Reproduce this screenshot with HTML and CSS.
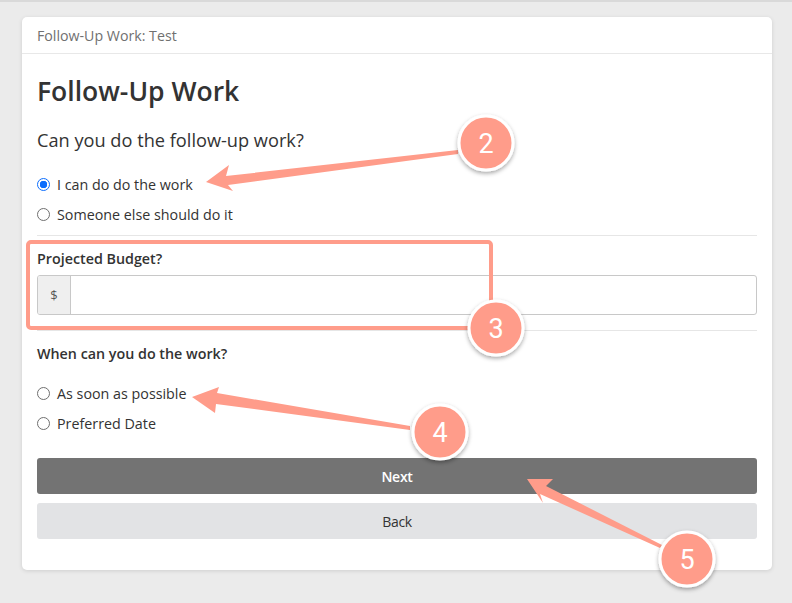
FILE: index.html
```html
<!DOCTYPE html>
<html>
<head>
<meta charset="utf-8">
<link rel="stylesheet" href="styles.css">
</head>
<body>
<div class="page">
  <div class="card">
    <div class="card-header">Follow-Up Work: Test</div>
    <div class="card-body">
      <h1 class="title">Follow-Up Work</h1>
      <div class="question">Can you do the follow-up work?</div>
      <div class="radios first">
        <label class="radio"><span class="dot checked"></span>I can do do the work</label>
        <label class="radio"><span class="dot"></span>Someone else should do it</label>
      </div>
      <div class="rule"></div>
      <div class="field">
        <div class="field-label">Projected Budget?</div>
        <div class="input-group">
          <span class="addon">$</span>
          <span class="input"></span>
        </div>
      </div>
      <div class="rule"></div>
      <div class="field-label when">When can you do the work?</div>
      <div class="radios second">
        <label class="radio"><span class="dot"></span>As soon as possible</label>
        <label class="radio"><span class="dot"></span>Preferred Date</label>
      </div>
      <div class="buttons">
        <div class="btn btn-next">Next</div>
        <div class="btn btn-back">Back</div>
      </div>
    </div>
  </div>

  <svg class="annotations" width="792" height="603" viewBox="0 0 792 603">
    <defs>
      <filter id="sh" x="-50%" y="-50%" width="200%" height="200%">
        <feDropShadow dx="0" dy="2" stdDeviation="2" flood-color="#000" flood-opacity="0.35"/>
      </filter>
    </defs>
    <rect x="28" y="242" width="463" height="86" rx="3" fill="none" stroke="#ff9c8a" stroke-width="4"/>
    <!-- arrow 2 -->
    <polygon points="206,182 229,165 226,176 458,150 458,154 228,185 233,191" fill="#ff9c8a"/>
    <!-- arrow 4 -->
    <polygon points="192,397 219,387 217,393 410,426 410,430 216,404 215,413" fill="#ff9c8a"/>
    <!-- arrow 5 -->
    <polygon points="527,479 553,479 546,486 662,545 660,548 540,494 543,503" fill="#ff9c8a"/>
    <g filter="url(#sh)">
      <circle cx="486" cy="143" r="27" fill="#ff9c8a" stroke="#fff" stroke-width="3"/>
      <circle cx="496" cy="328" r="27" fill="#ff9c8a" stroke="#fff" stroke-width="3"/>
      <circle cx="440" cy="432" r="27" fill="#ff9c8a" stroke="#fff" stroke-width="3"/>
      <circle cx="687" cy="559" r="27" fill="#ff9c8a" stroke="#fff" stroke-width="3"/>
    </g>
    <g class="nums" fill="#fff" text-anchor="middle">
      <text x="486" y="153">2</text>
      <text x="496" y="338">3</text>
      <text x="440" y="442">4</text>
      <text x="687" y="569">5</text>
    </g>
  </svg>
</div>
</body>
</html>
```

FILE: styles.css
```css
* { box-sizing: border-box; }
html, body { margin: 0; padding: 0; }
body {
  background: #ebebeb;
  font-family: "Open Sans", "Noto Sans", sans-serif;
  color: #333;
}
.page {
  position: relative;
  width: 792px;
  height: 603px;
  border-top: 2px solid #d9d9d9;
  padding: 15px 20px 0 22px;
}
.card {
  width: 750px;
  height: 553px;
  background: #fff;
  border-radius: 5px;
  box-shadow: 0 1px 4px rgba(0,0,0,0.12);
}
.card-header {
  height: 37px;
  padding: 0 15px;
  line-height: 37px;
  font-size: 14.2px;
  color: #707070;
  border-bottom: 1px solid #e8e8e8;
}
.card-body {
  padding: 0 15px;
}
.title {
  margin: 0;
  padding-top: 19px;
  font-size: 26.5px;
  font-weight: 600;
  line-height: 36px;
  color: #333;
}
.question {
  margin-top: 18px;
  font-size: 18.2px;
  line-height: 26px;
  color: #333;
}
.radios { display: flex; flex-direction: column; }
.radios.first { margin-top: 16px; }
.radio {
  display: flex;
  align-items: center;
  height: 30px;
  font-size: 14.3px;
  color: #333;
}
.dot {
  width: 13px;
  height: 13px;
  border-radius: 50%;
  border: 1px solid #6f6f6f;
  margin-right: 7px;
  flex: none;
  background: #fff;
}
.dot.checked {
  border-color: #0d6efd;
  border-width: 1px;
  background: radial-gradient(circle, #0d6efd 0 3.5px, #fff 4px);
}
.rule {
  height: 1px;
  background: #e6e6e6;
  margin-top: 6px;
}
.field { padding-top: 13px; }
.field-label {
  font-size: 14.3px;
  font-weight: 600;
  line-height: 20px;
  color: #333;
}
.input-group {
  display: flex;
  margin-top: 6px;
  height: 40px;
  border: 1px solid #c8c8c8;
  border-radius: 3px;
  overflow: hidden;
}
.addon {
  width: 33px;
  background: #efefef;
  border-right: 1px solid #c8c8c8;
  display: flex;
  align-items: center;
  justify-content: center;
  font-size: 13px;
  color: #555;
}
.input { flex: 1; }
.field + .rule { margin-top: 15px; }
.field-label.when { margin-top: 13px; }
.radios.second { margin-top: 14px; }
.buttons {
  margin-top: 20px;
  display: flex;
  flex-direction: column;
  gap: 9px;
}
.btn {
  height: 36px;
  border-radius: 3px;
  display: flex;
  align-items: center;
  justify-content: center;
  font-size: 14px;
}
.btn-next {
  background: #737373;
  color: #fff;
  font-weight: 600;
  letter-spacing: -0.3px;
}
.btn-back {
  background: #e2e3e5;
  color: #333;
  letter-spacing: -0.3px;
}
.annotations {
  position: absolute;
  left: 0;
  top: -2px;
  pointer-events: none;
}
.nums text {
  font-family: Roboto, "Noto Sans", sans-serif;
  font-size: 27px;
}
```
